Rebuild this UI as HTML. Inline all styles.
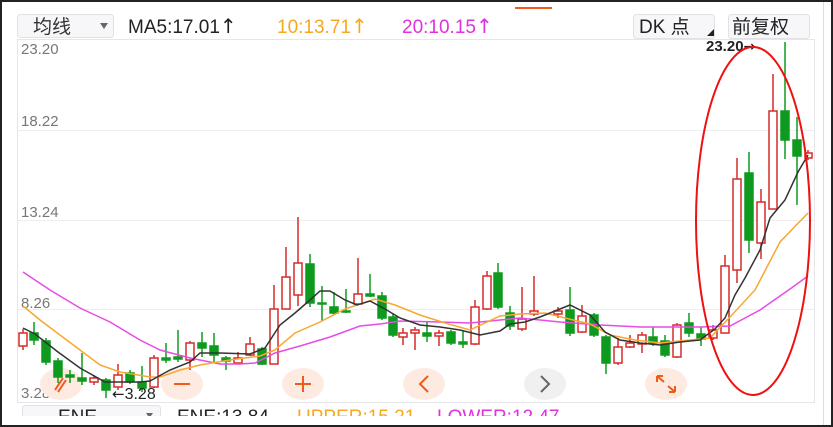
<!DOCTYPE html>
<html><head><meta charset="utf-8"><style>
html,body{margin:0;padding:0;background:#fff;}
body{width:833px;height:427px;overflow:hidden;position:relative;font-family:"Liberation Sans","Noto Sans CJK SC",sans-serif;}
svg{position:absolute;left:0;top:0;}
.ar{font-family:"DejaVu Sans",sans-serif;}
</style></head><body>
<svg width="833" height="427" viewBox="0 0 833 427" xmlns="http://www.w3.org/2000/svg" font-family="Liberation Sans, Noto Sans CJK SC, sans-serif">
<rect x="0" y="0" width="833" height="427" fill="#fff"/>
<rect x="515" y="7" width="37" height="2" fill="#f05a1a"/>
<rect x="17.5" y="14.5" width="96" height="23" rx="3" fill="#f7f7f9" stroke="#e2e2e6"/>
<text x="33" y="33" font-size="19" fill="#333">均线</text>
<path d="M100 23 L108 23 L104 29 Z" fill="#666"/>
<text x="128" y="33" font-size="19" fill="#222">MA5:17.01<tspan class="ar" font-size="20">↑</tspan></text>
<text x="277" y="33" font-size="19" fill="#f7a81e">10:13.71<tspan class="ar" font-size="20">↑</tspan></text>
<text x="402" y="33" font-size="19" fill="#e030e0">20:10.15<tspan class="ar" font-size="20">↑</tspan></text>
<rect x="633.5" y="14.5" width="81" height="24" rx="3" fill="#f7f7f9" stroke="#e2e2e6"/>
<text x="639" y="33" font-size="19" fill="#222">DK 点</text>
<path d="M707 36 L714 29 L714 36 Z" fill="#222"/>
<rect x="728.5" y="14.5" width="81" height="24" rx="3" fill="#f7f7f9" stroke="#e2e2e6"/>
<text x="732" y="33" font-size="19" fill="#222">前复权</text>
<rect x="17.5" y="39.5" width="797" height="363" fill="#fff" stroke="#e6e6ea"/>
<g stroke="#eeeef2" stroke-width="1">
<line x1="18" y1="130.5" x2="814" y2="130.5"/>
<line x1="18" y1="220.5" x2="814" y2="220.5"/>
<line x1="18" y1="309.5" x2="814" y2="309.5"/>
</g>
<g font-size="15" fill="#777">
<text x="21" y="54">23.20</text>
<text x="21" y="126">18.22</text>
<text x="21" y="217">13.24</text>
<text x="21" y="308">8.26</text>
<text x="21" y="398">3.28</text>
</g>
<g fill="#fdebe2">
<ellipse cx="61" cy="384" rx="21" ry="16"/>
<ellipse cx="182" cy="384" rx="21" ry="16"/>
<ellipse cx="303" cy="384" rx="21" ry="16"/>
<ellipse cx="424" cy="384" rx="21" ry="16"/>
<ellipse cx="545" cy="384" rx="21" ry="16" fill="#f0f0f0"/>
<ellipse cx="666" cy="384" rx="21" ry="16"/>
</g>
<g stroke="#f05a1a" stroke-width="2" fill="none">
<line x1="174" y1="384" x2="190" y2="384"/>
<line x1="295" y1="384" x2="311" y2="384"/><line x1="303" y1="376" x2="303" y2="392"/>
<path d="M428 376 L420 384 L428 392"/>
<path d="M657 376 L657 382 M657 376 L663 376 M657 376 L664 382 M675 392 L675 386 M675 392 L669 392 M675 392 L668 386"/>
<path d="M55 390 L63 378 M58 392 L66 380"/>
</g>
<path d="M541 376 L549 384 L541 392" stroke="#666" stroke-width="2" fill="none"/>
<g stroke="#d62a2a" stroke-width="1.5" fill="#fff">
<line x1="23" y1="329" x2="23" y2="350"/><rect x="19" y="333" width="8" height="13"/>
<line x1="94" y1="375" x2="94" y2="385"/><rect x="90" y="378" width="8" height="4"/>
<line x1="118" y1="364" x2="118" y2="390"/><rect x="114" y="375" width="8" height="12"/>
<line x1="154" y1="355" x2="154" y2="388"/><rect x="150" y="358" width="8" height="29"/>
<line x1="190" y1="341" x2="190" y2="370"/><rect x="186" y="343" width="8" height="17"/>
<line x1="238" y1="352" x2="238" y2="364"/><rect x="234" y="358" width="8" height="5"/>
<line x1="250" y1="337" x2="250" y2="356"/><rect x="246" y="344" width="8" height="11"/>
<line x1="274" y1="285" x2="274" y2="364"/><rect x="270" y="309" width="8" height="55"/>
<line x1="286" y1="247" x2="286" y2="309"/><rect x="282" y="277" width="8" height="32"/>
<line x1="298" y1="217" x2="298" y2="306"/><rect x="294" y="263" width="8" height="32"/>
<line x1="358" y1="258" x2="358" y2="305"/><rect x="354" y="294" width="8" height="10"/>
<line x1="403" y1="328" x2="403" y2="345"/><rect x="399" y="333" width="8" height="4"/>
<line x1="415" y1="327" x2="415" y2="350"/><rect x="411" y="330" width="8" height="3"/>
<line x1="439" y1="330" x2="439" y2="346"/><rect x="435" y="333" width="8" height="3"/>
<line x1="475" y1="300" x2="475" y2="345"/><rect x="471" y="307" width="8" height="37"/>
<line x1="487" y1="271" x2="487" y2="310"/><rect x="483" y="276" width="8" height="33"/>
<line x1="522" y1="287" x2="522" y2="331"/><rect x="518" y="319" width="8" height="10"/>
<line x1="534" y1="276" x2="534" y2="316"/><rect x="530" y="311" width="8" height="3"/>
<line x1="558" y1="307" x2="558" y2="318"/><rect x="554" y="311" width="8" height="3"/>
<line x1="582" y1="305" x2="582" y2="333"/><rect x="578" y="316" width="8" height="16"/>
<line x1="618" y1="338" x2="618" y2="365"/><rect x="614" y="347" width="8" height="16"/>
<line x1="630" y1="335" x2="630" y2="348"/><rect x="626" y="343" width="8" height="4"/>
<line x1="642" y1="332" x2="642" y2="353"/><rect x="638" y="335" width="8" height="9"/>
<line x1="677" y1="323" x2="677" y2="358"/><rect x="673" y="325" width="8" height="32"/>
<line x1="713" y1="325" x2="713" y2="340"/><rect x="709" y="330" width="8" height="8"/>
<line x1="725" y1="255" x2="725" y2="333"/><rect x="721" y="266" width="8" height="67"/>
<line x1="737" y1="158" x2="737" y2="283"/><rect x="733" y="179" width="8" height="91"/>
<line x1="761" y1="189" x2="761" y2="259"/><rect x="757" y="202" width="8" height="41"/>
<line x1="773" y1="74" x2="773" y2="209"/><rect x="769" y="111" width="8" height="98"/>
<line x1="808" y1="150" x2="808" y2="160"/><rect x="805" y="153" width="7" height="5"/>
</g>
<g stroke="#0e9a1e" stroke-width="1.5" fill="#0e9a1e">
<line x1="34" y1="322" x2="34" y2="345"/><rect x="30" y="333" width="8" height="7"/>
<line x1="46" y1="338" x2="46" y2="365"/><rect x="42" y="341" width="8" height="21"/>
<line x1="58" y1="358" x2="58" y2="383"/><rect x="54" y="361" width="8" height="16"/>
<line x1="70" y1="370" x2="70" y2="383"/><rect x="66" y="375" width="8" height="2"/>
<line x1="82" y1="353" x2="82" y2="385"/><rect x="78" y="378" width="8" height="3"/>
<line x1="106" y1="378" x2="106" y2="398"/><rect x="102" y="380" width="8" height="10"/>
<line x1="130" y1="370" x2="130" y2="384"/><rect x="126" y="373" width="8" height="9"/>
<line x1="142" y1="366" x2="142" y2="392"/><rect x="138" y="382" width="8" height="6"/>
<line x1="166" y1="343" x2="166" y2="363"/><rect x="162" y="358" width="8" height="2"/>
<line x1="178" y1="330" x2="178" y2="362"/><rect x="174" y="357" width="8" height="2"/>
<line x1="202" y1="332" x2="202" y2="357"/><rect x="198" y="343" width="8" height="5"/>
<line x1="214" y1="333" x2="214" y2="363"/><rect x="210" y="346" width="8" height="9"/>
<line x1="226" y1="356" x2="226" y2="370"/><rect x="222" y="358" width="8" height="3"/>
<line x1="262" y1="347" x2="262" y2="365"/><rect x="258" y="349" width="8" height="15"/>
<line x1="310" y1="254" x2="310" y2="307"/><rect x="306" y="264" width="8" height="39"/>
<line x1="322" y1="286" x2="322" y2="321"/><rect x="318" y="303" width="8" height="1"/>
<line x1="334" y1="292" x2="334" y2="315"/><rect x="330" y="307" width="8" height="6"/>
<line x1="346" y1="289" x2="346" y2="313"/><rect x="342" y="311" width="8" height="1"/>
<line x1="370" y1="274" x2="370" y2="297"/><rect x="366" y="294" width="8" height="2"/>
<line x1="382" y1="292" x2="382" y2="320"/><rect x="378" y="296" width="8" height="22"/>
<line x1="393" y1="314" x2="393" y2="337"/><rect x="389" y="317" width="8" height="18"/>
<line x1="427" y1="322" x2="427" y2="342"/><rect x="423" y="333" width="8" height="3"/>
<line x1="451" y1="330" x2="451" y2="345"/><rect x="447" y="332" width="8" height="11"/>
<line x1="463" y1="330" x2="463" y2="348"/><rect x="459" y="342" width="8" height="2"/>
<line x1="498" y1="263" x2="498" y2="309"/><rect x="494" y="273" width="8" height="34"/>
<line x1="510" y1="306" x2="510" y2="330"/><rect x="506" y="313" width="8" height="13"/>
<line x1="570" y1="287" x2="570" y2="336"/><rect x="566" y="310" width="8" height="23"/>
<line x1="594" y1="313" x2="594" y2="337"/><rect x="590" y="315" width="8" height="20"/>
<line x1="606" y1="335" x2="606" y2="374"/><rect x="602" y="337" width="8" height="26"/>
<line x1="653" y1="327" x2="653" y2="346"/><rect x="649" y="337" width="8" height="6"/>
<line x1="665" y1="335" x2="665" y2="357"/><rect x="661" y="341" width="8" height="14"/>
<line x1="689" y1="313" x2="689" y2="337"/><rect x="685" y="323" width="8" height="10"/>
<line x1="701" y1="327" x2="701" y2="346"/><rect x="697" y="334" width="8" height="5"/>
<line x1="749" y1="152" x2="749" y2="253"/><rect x="745" y="173" width="8" height="67"/>
<line x1="785" y1="42" x2="785" y2="159"/><rect x="781" y="111" width="8" height="29"/>
<line x1="797" y1="117" x2="797" y2="205"/><rect x="793" y="140" width="8" height="16"/>
</g>
<polyline fill="none" stroke="#e64ce6" stroke-width="1.5" points="23,272 50,290 80,308 110,322 140,340 160,350 190,358 220,364 240,364 255,363 275,353 300,346 330,337 360,326 380,324 400,321 440,322 470,323 500,320 520,318 560,322 600,325 640,327 700,327 730,326 760,310 790,289 808,276"/>
<polyline fill="none" stroke="#f7a830" stroke-width="1.5" points="23,306 40,320 60,335 80,350 100,365 120,372 150,377 160,377 180,370 200,365 230,360 260,356 275,350 295,333 320,322 345,309 375,299 395,305 420,315 445,323 470,330 500,316 520,314 545,313 565,318 590,324 610,335 635,340 660,343 690,340 710,338 730,317 755,290 780,242 808,213"/>
<polyline fill="none" stroke="#333" stroke-width="1.5" points="23,328 35,334 58,352 80,368 105,382 140,382 150,381 170,370 190,362 200,353 220,353 250,354 265,348 280,325 295,313 310,300 320,291 330,291 345,300 357,305 370,301 385,309 400,318 420,325 440,327 460,330 480,335 500,331 510,324 525,322 540,317 555,311 570,305 590,315 605,332 620,340 640,343 660,345 680,342 700,340 715,329 725,318 735,295 745,278 760,250 770,218 785,200 798,172 808,155"/>
<text x="706" y="51" font-size="15" font-weight="bold" fill="#222">23.20<tspan class="ar" font-size="14">→</tspan></text>
<text x="112" y="399" font-size="16" fill="#222"><tspan class="ar" font-size="15">←</tspan>3.28</text>
<ellipse cx="753" cy="221" rx="57" ry="174" fill="none" stroke="#f01010" stroke-width="2"/>
<rect x="22.5" y="405.5" width="138" height="20" rx="3" fill="#f7f7f9" stroke="#e2e2e6"/>
<text x="58" y="423" font-size="19" fill="#222">ENE</text>
<path d="M146 413 L153 413 L149.5 418 Z" fill="#666"/>
<text x="177" y="423" font-size="19" fill="#222">ENE:13.84</text>
<text x="297" y="423" font-size="19" fill="#f7a81e">UPPER:15.21</text>
<text x="437" y="423" font-size="19" fill="#e030e0">LOWER:12.47</text>
<rect x="0" y="416" width="833" height="11" fill="#fff"/>
<line x1="823.5" y1="0" x2="823.5" y2="427" stroke="#ddd"/>
<rect x="1" y="1" width="831" height="425" fill="none" stroke="#222" stroke-width="2"/>
</svg>
</body></html>
